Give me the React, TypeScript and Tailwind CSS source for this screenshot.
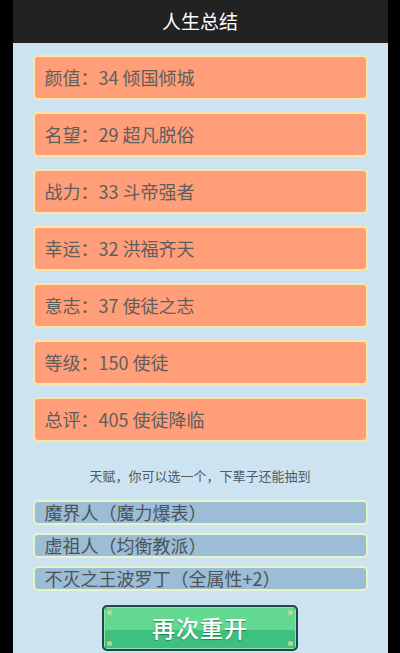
import React from "react"

const font = { fontFamily: '"Microsoft YaHei", "Noto Sans CJK SC", "Noto Sans", sans-serif' }

const summary = [
  { label: "颜值", value: "34 倾国倾城" },
  { label: "名望", value: "29 超凡脱俗" },
  { label: "战力", value: "33 斗帝强者" },
  { label: "幸运", value: "32 洪福齐天" },
  { label: "意志", value: "37 使徒之志" },
  { label: "等级", value: "150 使徒" },
  { label: "总评", value: "405 使徒降临" },
]

const talents = ["魔界人（魔力爆表）", "虚祖人（均衡教派）", "不灭之王波罗丁（全属性+2）"]

function Dot({ className }: { className: string }) {
  return <span className={`absolute h-[5px] w-[5px] rounded-full bg-[#b9d98c] ${className}`} />
}

function RestartButton() {
  return (
    <button className="relative mx-auto block h-[46px] w-[196px] rounded-[5px] border-2 border-[#1c4a4c] bg-[#1c4a4c] p-0">
      <div className="flex h-full w-full flex-col overflow-hidden rounded-[3px] border border-[#8fe6a8]">
        <div className="h-[55%] bg-[#62d890]" />
        <div className="flex-1 bg-[#3ec17e]" />
      </div>
      <span className="absolute inset-0 flex items-center justify-center text-[23px] font-medium tracking-[1px] text-white [text-shadow:0_1px_1px_rgba(30,80,60,0.6)]">
        再次重开
      </span>
      <Dot className="left-[3px] top-[3px]" />
      <Dot className="right-[3px] top-[3px]" />
      <Dot className="bottom-[3px] left-[3px]" />
      <Dot className="bottom-[3px] right-[3px]" />
    </button>
  )
}

export default function App() {
  return (
    <div className="min-h-[653px] bg-black" style={font}>
      <div className="mx-auto flex min-h-[653px] w-[375px] flex-col bg-[#cde3f1]">
        <header className="flex h-[43px] items-center justify-center bg-[#222222] text-[19px] text-white">
          人生总结
        </header>

        <div className="flex flex-col gap-[12px] px-[20px] pt-[12px]">
          {summary.map((item) => (
            <div
              key={item.label}
              className="flex h-[45px] items-center rounded-[5px] border-2 border-[#fbe6a4] bg-[#ff9e78] px-[10px] text-[18px] text-[#5e5e5e]"
            >
              {item.label}：{item.value}
            </div>
          ))}
        </div>

        <p className="mt-[24px] text-center text-[13px] text-[#4d5a63]">天赋，你可以选一个，下辈子还能抽到</p>

        <div className="mt-[14px] flex flex-col gap-[8px] px-[20px]">
          {talents.map((t) => (
            <div
              key={t}
              className="flex h-[25px] items-center rounded-[5px] border-2 border-[#e6f4c6] bg-[#9bbdd6] px-[10px] text-[18px] text-[#4e5358]"
            >
              {t}
            </div>
          ))}
        </div>

        <div className="mt-[14px]">
          <RestartButton />
        </div>
      </div>
    </div>
  )
}
